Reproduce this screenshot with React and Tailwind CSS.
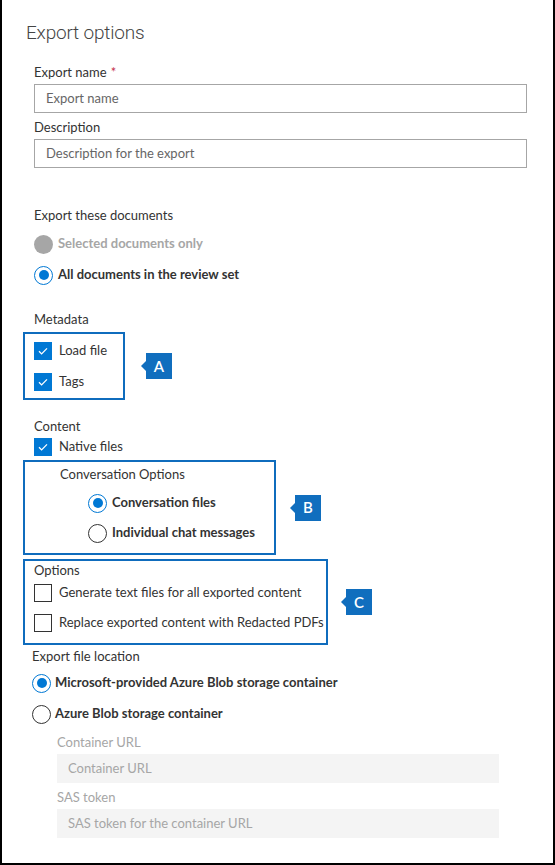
import React from "react";

const Check = ({ checked }) => (
  <span
    className={`flex h-[18px] w-[18px] shrink-0 items-center justify-center ${
      checked ? "bg-[#0078d4]" : "border border-[#333] bg-white"
    }`}
  >
    {checked && (
      <svg width="12" height="12" viewBox="0 0 12 12" fill="none">
        <path d="M2 6.3l2.6 2.6L10 3.4" stroke="white" strokeWidth="1.3" />
      </svg>
    )}
  </span>
);

const Radio = ({ checked, disabled }) => {
  if (disabled) return <span className="h-[19px] w-[19px] shrink-0 rounded-full bg-[#a6a6a6]" />;
  return (
    <span
      className={`flex h-[19px] w-[19px] shrink-0 items-center justify-center rounded-full border bg-white ${
        checked ? "border-[#0078d4]" : "border-[#333]"
      }`}
    >
      {checked && <span className="h-[10px] w-[10px] rounded-full bg-[#0078d4]" />}
    </span>
  );
};

const Badge = ({ letter }) => (
  <div className="flex items-center">
    <span className="h-0 w-0 border-y-[5px] border-r-[5px] border-y-transparent border-r-[#106ebe]" />
    <span className="flex h-[26px] w-[26px] items-center justify-center bg-[#106ebe] text-[15px] font-semibold text-white">
      {letter}
    </span>
  </div>
);

const Input = ({ placeholder, disabled, className = "" }) => (
  <div
    className={`flex h-[29px] items-center px-[11px] pt-[1px] text-[13px] ${
      disabled ? "bg-[#f4f4f4] text-[#a6a6a6]" : "border border-[#a6a6a6] text-[#666]"
    } ${className}`}
  >
    {placeholder}
  </div>
);

export default function App() {
  return (
    <div
      className="h-[865px] w-[555px] border-x-2 border-b-2 border-black bg-white text-[13px] text-[#333]"
      style={{ fontFamily: "Lato, 'Open Sans', sans-serif" }}
    >
      {/* header + name/description */}
      <div className="pt-[20px] pl-[24px]">
        <div
          className="flex h-[26px] items-center text-[19px] font-light tracking-[-0.2px] text-[#444]"
          style={{ fontFamily: "Roboto, Lato, sans-serif" }}
        >
          Export options
        </div>
      </div>
      <div className="pl-[32px] pr-[26px]">
        <div className="mt-[17px] flex h-[20px] items-center">
          Export name <span className="ml-1 text-[#c4314b]">*</span>
        </div>
        <Input placeholder="Export name" className="mt-[1px]" />
        <div className="mt-[5px] flex h-[20px] items-center">Description</div>
        <Input placeholder="Description for the export" className="mt-[1px]" />

        <div className="mt-[37px] flex h-[20px] items-center pt-[1px]">Export these documents</div>
        <div className="mt-[9px] flex h-[20px] items-center gap-[5px] font-bold text-[#a6a6a6]">
          <Radio disabled />
          Selected documents only
        </div>
        <div className="mt-[11px] flex h-[20px] items-center gap-[5px] font-bold">
          <Radio checked />
          All documents in the review set
        </div>

        <div className="mt-[24px] flex h-[20px] items-center pt-[1px]">Metadata</div>
      </div>

      {/* A */}
      <div className="mt-[3px] ml-[21px] flex items-center gap-[16px]">
        <div className="w-[102px] border-2 border-[#0f6cbd] pt-[7px] pb-[6px] pl-[9px]">
          <div className="flex h-[20px] items-center gap-[7px]">
            <Check checked />
            Load file
          </div>
          <div className="mt-[11px] flex h-[20px] items-center gap-[7px]">
            <Check checked />
            Tags
          </div>
        </div>
        <Badge letter="A" />
      </div>

      <div className="pl-[32px]">
        <div className="mt-[16px] flex h-[20px] items-center pt-[1px]">Content</div>
        <div className="mt-[1px] flex h-[20px] items-center gap-[7px]">
          <Check checked />
          Native files
        </div>
      </div>

      {/* B */}
      <div className="mt-[3px] ml-[21px] flex items-center gap-[14px]">
        <div className="w-[253px] border-2 border-[#0f6cbd] pt-[2px] pb-[10px] pl-[35px]">
          <div className="flex h-[20px] items-center pt-[1px]">Conversation Options</div>
          <div className="mt-[9px] ml-[28px] flex h-[20px] items-center gap-[5px] font-bold">
            <Radio checked />
            Conversation files
          </div>
          <div className="mt-[10px] ml-[28px] flex h-[20px] items-center gap-[5px] font-bold">
            <Radio />
            Individual chat messages
          </div>
        </div>
        <Badge letter="B" />
      </div>

      {/* C */}
      <div className="mt-[4px] ml-[21px] flex items-center gap-[13px]">
        <div className="w-[305px] border-2 border-[#0f6cbd] pb-[10px] pl-[9px]">
          <div className="flex h-[18px] items-center pt-[1px]">Options</div>
          <div className="mt-[4px] flex h-[20px] items-center gap-[7px]">
            <Check />
            Generate text files for all exported content
          </div>
          <div className="mt-[10px] flex h-[20px] items-center gap-[7px]">
            <Check />
            Replace exported content with Redacted PDFs
          </div>
        </div>
        <Badge letter="C" />
      </div>

      {/* location */}
      <div className="pl-[30px]">
        <div className="mt-[1px] flex h-[20px] items-center pt-[1px]">Export file location</div>
        <div className="mt-[7px] flex h-[20px] items-center gap-[4px] font-bold">
          <Radio checked />
          Microsoft-provided Azure Blob storage container
        </div>
        <div className="mt-[11px] flex h-[20px] items-center gap-[4px] font-bold">
          <Radio />
          Azure Blob storage container
        </div>
        <div className="w-[467px] pl-[25px]">
          <div className="mt-[8px] flex h-[20px] items-center pt-[1px] text-[#a6a6a6]">Container URL</div>
          <Input disabled placeholder="Container URL" className="mt-[2px]" />
          <div className="mt-[4px] flex h-[20px] items-center pt-[1px] text-[#a6a6a6]">SAS token</div>
          <Input disabled placeholder="SAS token for the container URL" className="mt-[2px]" />
        </div>
      </div>
    </div>
  );
}
